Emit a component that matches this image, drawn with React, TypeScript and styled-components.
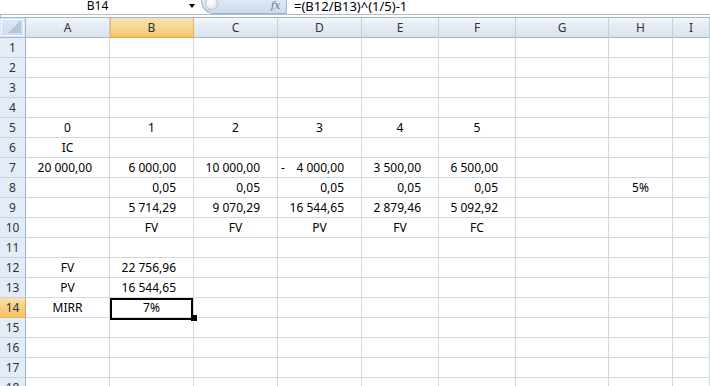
import React from 'react';
import styled, { createGlobalStyle, css } from 'styled-components';

const GlobalStyle = createGlobalStyle`
  html, body { margin: 0; padding: 0; background: #fff; overflow: hidden; }
  body { font-family: "Noto Sans", "Open Sans", sans-serif; }
  * { box-sizing: border-box; }
`;

const COLS = '26px 84px 84px 84px 84px 77px 77px 93px 64px 1fr';
const GRID = '#d0d7e5';
const HEAD_BORDER = '#9eb6ce';

const Window = styled.div`
  width: 710px;
  height: 386px;
  overflow: hidden;
  display: flex;
  flex-direction: column;
  background: #fff;
`;

const FormulaBar = styled.div`
  height: 15px;
  display: flex;
  align-items: flex-start;
  overflow: hidden;
  border-bottom: 1px solid #aebdd0;
  flex: none;
`;

const NameBox = styled.div`
  width: 199px;
  height: 14px;
  display: flex;
  align-items: flex-start;
  padding-left: 6px;
`;

const NameText = styled.div`
  flex: 1;
  text-align: center;
  font-size: 12px;
  line-height: 12px;
  color: #000;
`;

const DropArrow = styled.div`
  width: 0;
  height: 0;
  border-left: 3.5px solid transparent;
  border-right: 3.5px solid transparent;
  border-top: 4px solid #000;
  margin: 4px 4px 0 0;
`;

const FxButton = styled.div`
  align-self: flex-end;
  width: 86px;
  height: 26px;
  margin-left: 2px;
  border: 1px solid #9fb1c8;
  border-right-color: #a7b6ca;
  border-radius: 13px 0 0 13px;
  background: linear-gradient(#f1f5fb, #dae5f3 60%, #cbdaee);
  display: flex;
  align-items: flex-end;
  justify-content: space-between;
  padding: 0 6px 2px 3px;
`;

const ExpandCircle = styled.div`
  width: 13px;
  height: 13px;
  border-radius: 50%;
  margin-bottom: 1px;
  border: 1px solid #b7c3d2;
  background: radial-gradient(circle at 45% 35%, #ffffff, #e8edf3 60%, #c9d2dd);
`;

const FxLabel = styled.span`
  font-family: "DejaVu Serif", "Liberation Serif", serif;
  font-style: italic;
  font-size: 11px;
  line-height: 11px;
  color: #7b7b7b;
  letter-spacing: -0.5px;
`;

const FormulaInput = styled.div`
  flex: 1;
  padding-left: 7px;
  font-size: 13px;
  line-height: 13px;
  color: #000;
  white-space: nowrap;
`;

const Gap = styled.div`
  height: 2px;
  flex: none;
  border-left: 1px solid #aebdd0;
`;

const Sheet = styled.div`
  display: flex;
  flex-direction: column;
  border-top: 1px solid ${HEAD_BORDER};
`;

const Row = styled.div`
  display: grid;
  grid-template-columns: ${COLS};
  height: 20px;
  flex: none;
`;

const Corner = styled.div`
  border-right: 1px solid ${HEAD_BORDER};
  border-bottom: 1px solid ${HEAD_BORDER};
  background: #dde7f3;
  display: flex;
  padding: 1px;
`;

const CornerInner = styled.div`
  flex: 1;
  border: 1px solid #f4f8fc;
  background: linear-gradient(#dfe8f4, #cfdced);
  display: flex;
  align-items: flex-end;
  justify-content: flex-end;
  padding: 0 2px 2px 0;
`;

const ColHead = styled.div<{ $sel?: boolean }>`
  border-right: 1px solid #c2d0e1;
  border-bottom: 1px solid ${HEAD_BORDER};
  background: linear-gradient(#f3f6fb, #e4eaf3 50%, #dbe3ee);
  font-size: 12px;
  line-height: 19px;
  text-align: center;
  color: #333;
  ${(p) =>
    p.$sel &&
    css`
      background: linear-gradient(#fbe2b2, #f8d593 50%, #f2c466);
      border-right-color: #f0b050;
      border-bottom-color: #f2a03a;
      box-shadow: inset 1px 0 0 #f0b458;
    `}
`;

const RowHead = styled.div<{ $sel?: boolean }>`
  border-right: 1px solid ${HEAD_BORDER};
  border-bottom: 1px solid #c5d3e3;
  background: #e4ecf7;
  font-size: 12px;
  line-height: 18px;
  padding-top: 1px;
  text-align: center;
  color: #333;
  ${(p) =>
    p.$sel &&
    css`
      background: linear-gradient(#fbe0ab, #f5cc7c 60%, #f2c466);
      border-right-color: #f29c3b;
      border-bottom-color: #f0b050;
    `}
`;

type Align = 'left' | 'center' | 'right';

const Cell = styled.div<{ $align?: Align; $selected?: boolean }>`
  position: relative;
  border-right: 1px solid ${GRID};
  border-bottom: 1px solid ${GRID};
  font-size: 12px;
  line-height: 18px;
  padding-top: 1px;
  color: #000;
  white-space: nowrap;
  text-align: ${(p) => p.$align ?? 'left'};
  padding-right: ${(p) => (p.$align === 'right' ? '17px' : '0')};
  ${(p) =>
    p.$selected &&
    css`
      &::after {
        content: '';
        position: absolute;
        left: 0;
        top: 0;
        right: 0;
        bottom: -3px;
        border: 2px solid #000;
        z-index: 2;
      }
      &::before {
        content: '';
        position: absolute;
        right: -5px;
        bottom: -5px;
        width: 6px;
        height: 6px;
        background: #000;
        border: 1px solid #fff;
        border-top-width: 0;
        border-left-width: 0;
        z-index: 3;
      }
    `}
`;

const AcctCell = styled(Cell)`
  display: flex;
  justify-content: space-between;
  padding-left: 3px;
  padding-right: 17px;
`;

type CellDef = { t: string; a: Align; dash?: boolean; sel?: boolean };

const r = (t: string): CellDef => ({ t, a: 'right' });
const c = (t: string): CellDef => ({ t, a: 'center' });

const DATA: Record<number, (CellDef | null)[]> = {
  5: [c('0'), c('1'), c('2'), c('3'), c('4'), c('5')],
  6: [c('IC')],
  7: [r('20 000,00'), r('6 000,00'), r('10 000,00'), { t: '4 000,00', a: 'right', dash: true }, r('3 500,00'), r('6 500,00')],
  8: [null, r('0,05'), r('0,05'), r('0,05'), r('0,05'), r('0,05'), null, c('5%')],
  9: [null, r('5 714,29'), r('9 070,29'), r('16 544,65'), r('2 879,46'), r('5 092,92')],
  10: [null, c('FV'), c('FV'), c('PV'), c('FV'), c('FC')],
  12: [c('FV'), r('22 756,96')],
  13: [c('PV'), r('16 544,65')],
  14: [c('MIRR'), { t: '7%', a: 'center', sel: true }],
};

const LETTERS = ['A', 'B', 'C', 'D', 'E', 'F', 'G', 'H', 'I'];

export default function App() {
  const rows = Array.from({ length: 18 }, (_, i) => i + 1);
  return (
    <Window>
      <GlobalStyle />
      <FormulaBar>
        <NameBox>
          <NameText>B14</NameText>
          <DropArrow />
        </NameBox>
        <FxButton>
          <ExpandCircle />
          <FxLabel>fx</FxLabel>
        </FxButton>
        <FormulaInput>=(B12/B13)^(1/5)-1</FormulaInput>
      </FormulaBar>
      <Gap />
      <Sheet>
        <Row>
          <Corner>
            <CornerInner>
              <svg width="13" height="13" viewBox="0 0 13 13">
                <polygon points="13,0 13,13 0,13" fill="#b4c6da" />
              </svg>
            </CornerInner>
          </Corner>
          {LETTERS.map((l) => (
            <ColHead key={l} $sel={l === 'B'}>
              {l}
            </ColHead>
          ))}
        </Row>
        {rows.map((n) => {
          const defs = DATA[n] ?? [];
          return (
            <Row key={n}>
              <RowHead $sel={n === 14}>{n}</RowHead>
              {LETTERS.map((l, i) => {
                const d = defs[i];
                if (d && d.dash) {
                  return (
                    <AcctCell key={l}>
                      <span>-</span>
                      <span>{d.t}</span>
                    </AcctCell>
                  );
                }
                return (
                  <Cell key={l} $align={d?.a} $selected={d?.sel}>
                    {d?.t ?? ''}
                  </Cell>
                );
              })}
            </Row>
          );
        })}
      </Sheet>
    </Window>
  );
}
